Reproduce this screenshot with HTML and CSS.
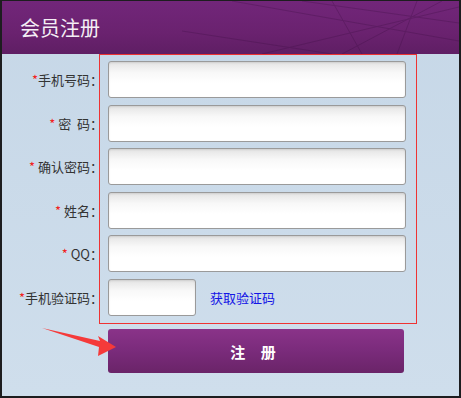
FILE: index.html
```html
<!DOCTYPE html>
<html lang="zh-CN">
<head>
    <meta charset="UTF-8">
    <title>会员注册</title>
    <link rel="stylesheet" href="styles.css">
</head>
<body>

    <div class="panel">
        <!-- Header -->
        <div class="header">
            <svg class="header-lines" width="457" height="53" viewBox="0 0 457 53">
                <g stroke="#3e0f44" stroke-width="1" opacity="0.3" fill="none">
                    <line x1="230" y1="0" x2="457" y2="40"/>
                    <line x1="300" y1="0" x2="457" y2="22"/>
                    <line x1="260" y1="53" x2="457" y2="6"/>
                    <line x1="340" y1="53" x2="440" y2="0"/>
                    <line x1="395" y1="53" x2="415" y2="0"/>
                    <line x1="330" y1="0" x2="360" y2="53"/>
                    <line x1="180" y1="30" x2="330" y2="53"/>
                </g>
            </svg>
            <h1>会员注册</h1>
        </div>

        <!-- Form -->
        <div class="form">
            <div class="row">
                <label><span class="star">*</span>手机号码：</label>
                <input type="text" class="field">
            </div>
            <div class="row">
                <label><span class="star">*</span> 密&nbsp;&nbsp;码：</label>
                <input type="password" class="field">
            </div>
            <div class="row">
                <label><span class="star">*</span> 确认密码：</label>
                <input type="password" class="field">
            </div>
            <div class="row">
                <label><span class="star">*</span> 姓名：</label>
                <input type="text" class="field">
            </div>
            <div class="row">
                <label><span class="star">*</span> QQ：</label>
                <input type="text" class="field">
            </div>
            <div class="row">
                <label><span class="star">*</span>手机验证码：</label>
                <input type="text" class="field small">
                <a href="#" class="get-code">获取验证码</a>
            </div>
            <div class="row">
                <span></span>
                <button class="submit-btn">注 册</button>
            </div>
        </div>

        <!-- Annotation marks -->
        <div class="mark-box"></div>
        <svg class="mark-arrow" width="120" height="40" viewBox="0 0 120 40">
            <polygon fill="#f53a3a" points="40,3 98,16 96,11 114,22 96,31 97,22"/>
        </svg>
    </div>

</body>
</html>
```

FILE: styles.css
```css
/* Page */
body {
    margin: 0;
    font-family: "Noto Sans CJK SC", "Liberation Sans", sans-serif;
}

/* Outer frame */
.panel {
    width: 461px;
    height: 398px;
    box-sizing: border-box;
    border: 2px solid #1d1d1f;
    border-top-width: 1px;
    background: linear-gradient(180deg, #c6d7e7 0%, #cfdeec 100%);
    position: relative;
    overflow: hidden;
}

/* Header */
.header {
    height: 53px;
    background: linear-gradient(180deg, #72267a 0%, #6a226f 60%, #5f1e64 100%);
    position: relative;
    display: flex;
    align-items: center;
}

.header-lines {
    position: absolute;
    top: 0;
    left: 0;
}

.header h1 {
    margin: 0 0 0 18px;
    font-size: 20px;
    font-weight: normal;
    color: #f4eef5;
    position: relative;
}

/* Form rows */
.form {
    display: flex;
    flex-direction: column;
    gap: 6.6px;
    padding-top: 7px;
}

.row {
    display: grid;
    grid-template-columns: 95px auto auto;
    column-gap: 11px;
    align-items: center;
    justify-content: start;
}

.row label {
    text-align: right;
    font-size: 13px;
    color: #333333;
    white-space: pre;
    margin-right: -6px;
}

.star {
    color: #f21d1d;
}

.field {
    width: 298px;
    height: 37px;
    box-sizing: border-box;
    margin: 0;
    border: 1px solid #9a9a9a;
    border-radius: 3px;
    background: linear-gradient(180deg, #e4e4e4 0%, #f8f8f8 30%, #ffffff 60%);
    box-shadow: inset 0 1px 2px rgba(0, 0, 0, 0.1);
}

.field.small {
    width: 88px;
}

.get-code {
    margin-left: 3px;
    font-size: 13px;
    color: #1414e6;
    text-decoration: none;
}

/* Submit button */
.submit-btn {
    grid-column: 2 / 4;
    width: 296px;
    height: 44px;
    margin-top: 6.5px;
    border: none;
    border-radius: 3px;
    background: linear-gradient(180deg, #8a3389 0%, #7a2b7b 50%, #6a2468 100%);
    color: #ffffff;
    font-family: "Noto Sans CJK SC", sans-serif;
    font-size: 15px;
    font-weight: bold;
    letter-spacing: 6px;
    padding-left: 6px;
    cursor: pointer;
}

/* Red annotation box around the fields */
.mark-box {
    position: absolute;
    left: 97px;
    top: 53px;
    width: 316px;
    height: 268px;
    border: 1px solid #ee3333;
}

.mark-arrow {
    position: absolute;
    left: 0;
    top: 324px;
}
```
